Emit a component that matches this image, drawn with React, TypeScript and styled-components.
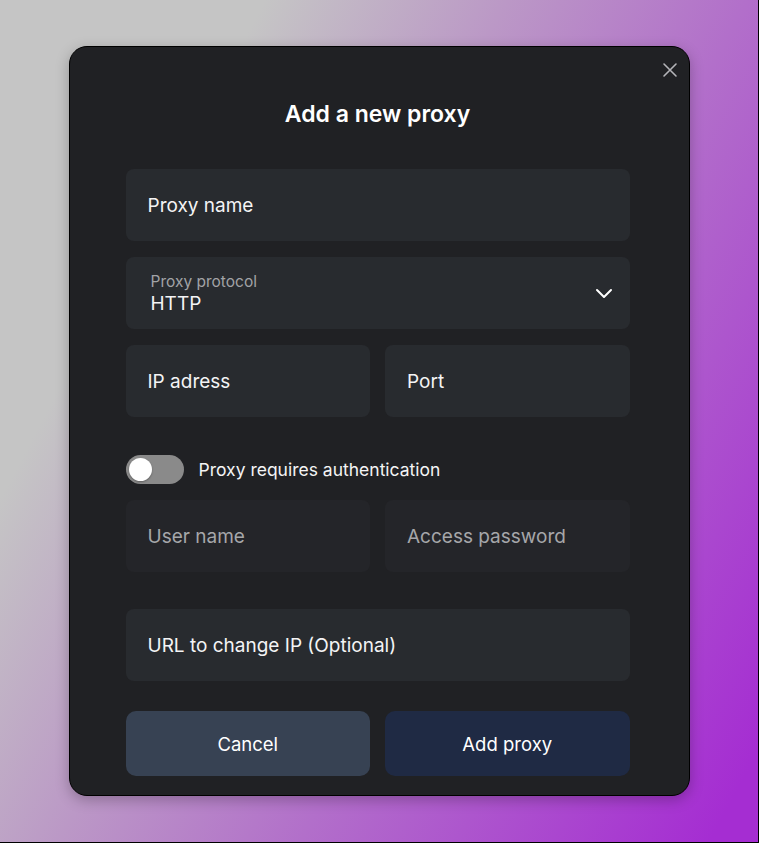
import styled, { createGlobalStyle } from 'styled-components';

const GlobalStyle = createGlobalStyle`
  html, body {
    margin: 0;
    padding: 0;
  }
  body {
    font-family: Inter, "Noto Sans", "Liberation Sans", sans-serif;
    -webkit-font-smoothing: antialiased;
  }
  * {
    box-sizing: border-box;
  }
`;

const App = () => {
  return (
    <>
      <GlobalStyle />
      <Page>
        <Modal>
          <CloseButton aria-label="Close">
            <svg width="16" height="16" viewBox="0 0 16 16" fill="none">
              <path d="M2 2L14 14M14 2L2 14" stroke="#b4b4b8" strokeWidth="1.6" strokeLinecap="round" />
            </svg>
          </CloseButton>

          <Title>Add a new proxy</Title>

          <Form>
            <Field>
              <FieldText>Proxy name</FieldText>
            </Field>

            <SelectField>
              <SelectValue>
                <SelectLabel>Proxy protocol</SelectLabel>
                <SelectText>HTTP</SelectText>
              </SelectValue>
              <svg width="18" height="11" viewBox="0 0 18 11" fill="none">
                <path d="M2 2L9 9L16 2" stroke="#ffffff" strokeWidth="2" strokeLinecap="round" strokeLinejoin="round" />
              </svg>
            </SelectField>

            <Row>
              <Field>
                <FieldText>IP adress</FieldText>
              </Field>
              <Field>
                <FieldText>Port</FieldText>
              </Field>
            </Row>

            <ToggleRow>
              <Toggle>
                <Knob />
              </Toggle>
              <ToggleLabel>Proxy requires authentication</ToggleLabel>
            </ToggleRow>

            <Row>
              <Field $disabled>
                <FieldText $muted>User name</FieldText>
              </Field>
              <Field $disabled>
                <FieldText $muted>Access password</FieldText>
              </Field>
            </Row>

            <Field $spaced>
              <FieldText>URL to change IP (Optional)</FieldText>
            </Field>
          </Form>

          <Actions>
            <ActionBtn $variant="secondary">Cancel</ActionBtn>
            <ActionBtn $variant="primary">Add proxy</ActionBtn>
          </Actions>
        </Modal>
      </Page>
    </>
  );
};

export default App;

export const Page = styled.div`
  width: 759px;
  height: 843px;
  display: flex;
  align-items: center;
  justify-content: center;
  background: linear-gradient(118deg, #c5c5c5 22%, #bb98c6 42%, #b26fca 62%, #a52dd2 96%);
  border-right: 1px solid #000;
  border-bottom: 1px solid #000;
`;

export const Modal = styled.div`
  position: relative;
  width: 621px;
  height: 750px;
  padding: 53px 59px 20px 56px;
  background: #202124;
  border: 1px solid #000;
  border-radius: 18px;
  box-shadow: 0 4px 14px rgba(0, 0, 0, 0.25);
  display: flex;
  flex-direction: column;
`;

export const CloseButton = styled.button`
  position: absolute;
  top: 15px;
  right: 11px;
  width: 16px;
  height: 16px;
  padding: 0;
  border: none;
  background: transparent;
  display: flex;
  align-items: center;
  justify-content: center;
  cursor: pointer;
`;

export const Title = styled.h2`
  margin: 0;
  text-align: center;
  color: #ffffff;
  font-size: 23px;
  line-height: 28px;
  font-weight: 600;
`;

export const Form = styled.div`
  margin-top: 41px;
  display: flex;
  flex-direction: column;
  gap: 16px;
`;

export const Field = styled.div<{ $disabled?: boolean; $spaced?: boolean }>`
  flex: 1 1 0;
  min-height: 72px;
  border-radius: 8px;
  background: ${(p) => (p.$disabled ? '#242529' : '#282b2f')};
  padding: 0 22px;
  display: flex;
  align-items: center;
  margin-top: ${(p) => (p.$spaced ? '21px' : '0')};
`;

export const FieldText = styled.span<{ $muted?: boolean }>`
  font-size: 19px;
  color: ${(p) => (p.$muted ? '#a6a7aa' : '#f4f4f5')};
`;

export const SelectField = styled.div`
  height: 72px;
  border-radius: 8px;
  background: #282b2f;
  padding: 0 17px 0 25px;
  display: flex;
  align-items: center;
  justify-content: space-between;
`;

export const SelectValue = styled.div`
  display: flex;
  flex-direction: column;
  gap: 1px;
`;

export const SelectLabel = styled.span`
  font-size: 15.5px;
  line-height: 20px;
  color: #a2a3a6;
`;

export const SelectText = styled.span`
  font-size: 19px;
  line-height: 22px;
  color: #f4f4f5;
`;

export const Row = styled.div`
  display: flex;
  gap: 15px;
`;

export const ToggleRow = styled.div`
  margin-top: 22px;
  display: flex;
  align-items: center;
  gap: 15px;
  height: 29px;
`;

export const Toggle = styled.div`
  width: 58px;
  height: 29px;
  border-radius: 15px;
  background: #8a8a8a;
  padding: 3px;
  display: flex;
  align-items: center;
`;

export const Knob = styled.div`
  width: 23px;
  height: 23px;
  border-radius: 50%;
  background: #ffffff;
  box-shadow: 0 1px 2px rgba(0, 0, 0, 0.3);
`;

export const ToggleLabel = styled.span`
  font-size: 17.5px;
  color: #f4f4f5;
`;

export const Actions = styled.div`
  margin-top: 30px;
  display: flex;
  gap: 15px;
`;

export const ActionBtn = styled.button<{ $variant: 'primary' | 'secondary' }>`
  flex: 1;
  height: 65px;
  border: none;
  border-radius: 10px;
  background: ${(p) => (p.$variant === 'primary' ? '#1f2a44' : '#374253')};
  color: #ffffff;
  font-family: inherit;
  font-size: 18.5px;
  font-weight: 400;
  cursor: pointer;
`;
